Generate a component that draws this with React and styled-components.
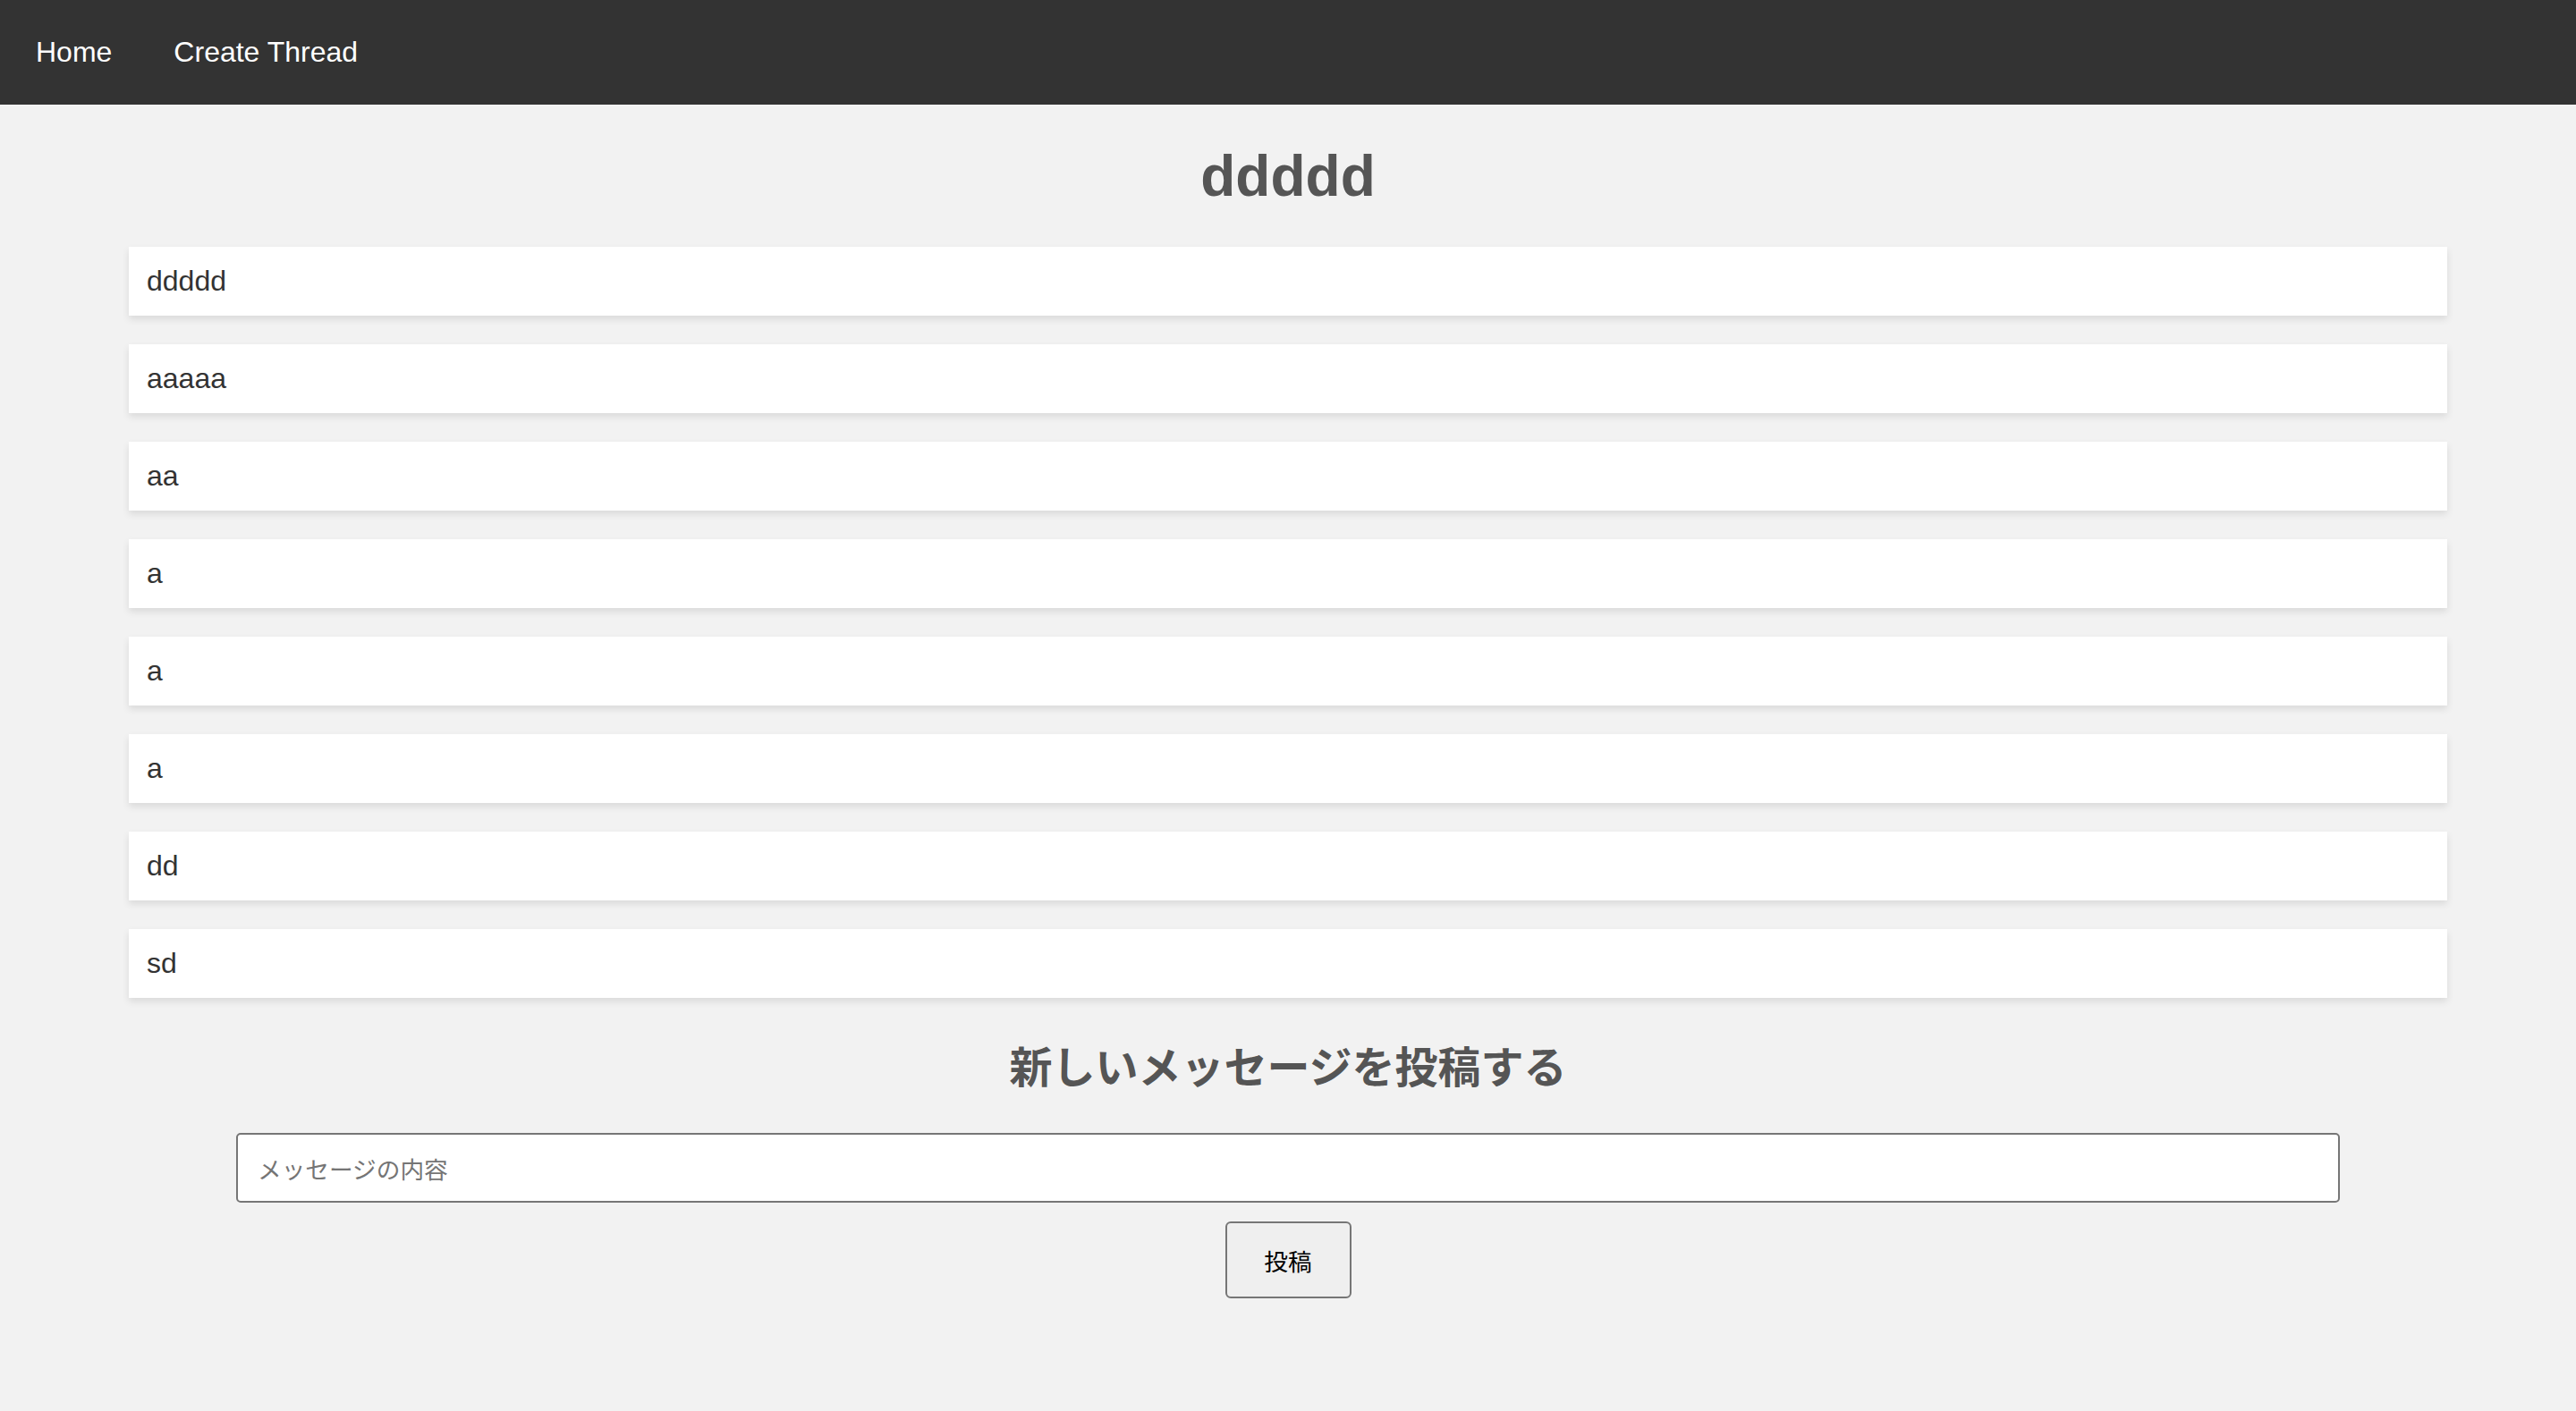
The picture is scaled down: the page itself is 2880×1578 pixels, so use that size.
import React from 'react';
import styled, { createGlobalStyle } from 'styled-components';

const GlobalStyle = createGlobalStyle`
   html, body {
      margin: 0;
      padding: 0;
      background: #f2f2f2;
      font-family: "Liberation Sans", Arial, "Noto Sans CJK JP", sans-serif;
   }
`

const Nav = styled.nav`
   display: flex;
   align-items: center;
   gap: 69px;
   height: 117px;
   padding: 0 40px;
   background: #333333;
`

const NavLink = styled.a`
   color: #ffffff;
   font-size: 32px;
   text-decoration: none;
   cursor: pointer;
`

const Main = styled.main`
   display: flex;
   flex-direction: column;
   align-items: center;
   padding-bottom: 120px;
`

const Title = styled.h1`
   margin: 44px 0 42px;
   font-size: 64px;
   font-weight: bold;
   line-height: 73px;
   color: #555555;
`

const MessageList = styled.ul`
   display: flex;
   flex-direction: column;
   gap: 32px;
   width: 90%;
   margin: 0;
   padding: 0;
   list-style: none;
`

const Message = styled.li`
   padding: 20px;
   background: #ffffff;
   color: #333333;
   font-size: 32px;
   line-height: 37px;
   box-shadow: 0 4px 8px rgba(0, 0, 0, 0.1);
`

const SubTitle = styled.h2`
   margin: 45px 0 48px;
   font-family: "Noto Sans CJK JP", sans-serif;
   font-size: 48px;
   font-weight: bold;
   line-height: 58px;
   color: #555555;
`

const Form = styled.form`
   display: flex;
   flex-direction: column;
   align-items: center;
   gap: 21px;
   width: 100%;
`

const Input = styled.input`
   box-sizing: border-box;
   width: calc(80% + 48px);
   height: 78px;
   padding: 0 22px;
   border: 2px solid #767676;
   border-radius: 5px;
   background: #ffffff;
   font-family: "Noto Sans CJK JP", sans-serif;
   font-size: 26.67px;
   color: #000000;

   &::placeholder {
      color: #757575;
   }
`

const Button = styled.button`
   box-sizing: border-box;
   width: 141px;
   height: 86px;
   border: 2px solid #767676;
   border-radius: 6px;
   background: #efefef;
   font-family: "Noto Sans CJK JP", sans-serif;
   font-size: 26.67px;
   color: #000000;
   cursor: pointer;
`

const messages = ['ddddd', 'aaaaa', 'aa', 'a', 'a', 'a', 'dd', 'sd']

const App = () => {
   return (
      <>
         <GlobalStyle />
         <Nav>
            <NavLink>Home</NavLink>
            <NavLink>Create Thread</NavLink>
         </Nav>
         <Main>
            <Title>ddddd</Title>
            <MessageList>
               {messages.map((text, i) => (
                  <Message key={i}>{text}</Message>
               ))}
            </MessageList>
            <SubTitle>新しいメッセージを投稿する</SubTitle>
            <Form onSubmit={e => e.preventDefault()}>
               <Input type="text" placeholder="メッセージの内容" />
               <Button type="submit">投稿</Button>
            </Form>
         </Main>
      </>
   )
}

export default App;
